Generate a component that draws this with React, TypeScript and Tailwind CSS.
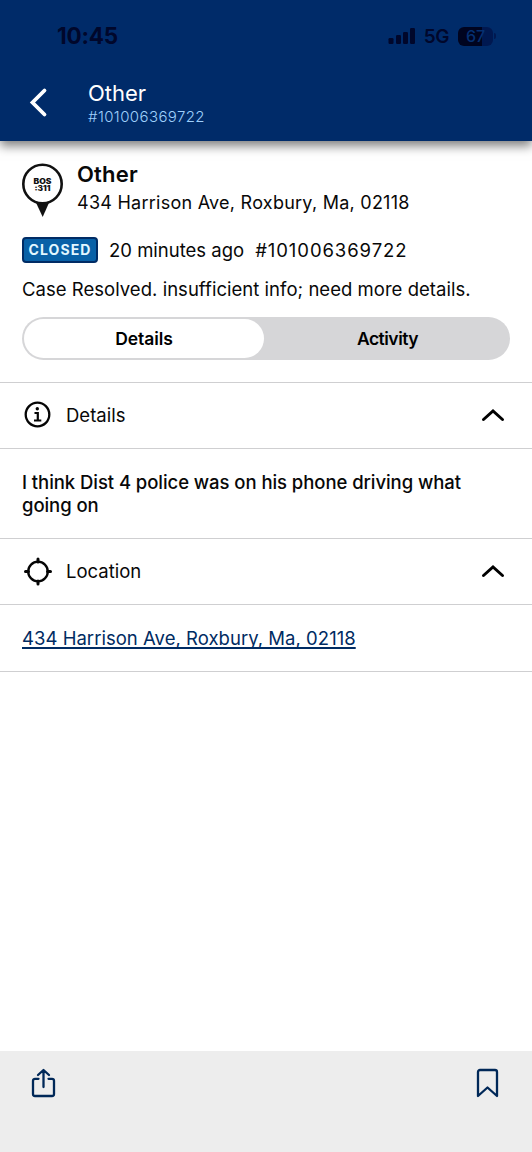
import type { ReactNode } from "react";

function StatusBar() {
  return (
    <div className="flex h-[72px] items-center justify-between pr-[36px] pl-[57px] text-[#00072b]">
      <span className="text-[22.500px] leading-[72px] font-bold tracking-[-0.200px]">10:45</span>
      <div className="flex items-center">
        <svg width="28" height="18" viewBox="0 0 28 18" fill="currentColor">
          <rect x="0.5" y="11" width="5" height="6" rx="1.3" />
          <rect x="8" y="8" width="5" height="9" rx="1.3" />
          <rect x="15" y="5" width="5" height="12" rx="1.3" />
          <rect x="22" y="1" width="5" height="16" rx="1.3" />
        </svg>
        <span className="mt-px ml-[8px] text-[19px] leading-6 font-semibold tracking-[-0.500px]">5G</span>
        <div className="ml-[9px] flex items-center gap-px">
          <div className="flex h-[19px] w-[35px] items-center justify-center rounded-[6px] bg-gradient-to-r from-[#00041f] from-68% to-[#001850] to-68% text-[16px] leading-none font-medium text-[#053071]">
            67
          </div>
          <div className="h-[6px] w-[2px] rounded-r-full bg-[#001850]" />
        </div>
      </div>
    </div>
  );
}

function Header() {
  return (
    <header className="relative z-10 h-[141px] bg-[#002b69] shadow-[0_5px_10px_rgba(0,0,0,0.5)]">
      <StatusBar />
      <div className="flex pl-[28px]">
        <svg className="mt-[15px]" width="22" height="32" viewBox="0 0 22 32" fill="none" stroke="white" strokeWidth="3.800" strokeLinecap="round" strokeLinejoin="miter">
          <path d="M16.500 3.500 4.500 15.500l12 12" />
        </svg>
        <div className="ml-[38px] pt-[7px]">
          <div className="text-[22px] leading-[28px] text-white">Other</div>
          <div className="mt-px text-[15px] leading-[18px] font-light tracking-[0.400px] text-[#9fd0fb]">#101006369722</div>
        </div>
      </div>
    </header>
  );
}

function CasePin() {
  return (
    <svg className="mt-[2px]" width="42" height="56" viewBox="0 0 42 56">
      <path d="M13 37.500h15L20.700 54z" fill="#111" />
      <circle cx="20.500" cy="21" r="19.200" fill="white" stroke="#111" strokeWidth="2.600" />
      <text x="20.500" y="20.600" textAnchor="middle" textLength="18" lengthAdjust="spacingAndGlyphs" fontSize="7.200" fontWeight="900" fill="#111">BOS</text>
      <text x="20.500" y="28.400" textAnchor="middle" textLength="16" lengthAdjust="spacingAndGlyphs" fontSize="7.200" fontWeight="900" fill="#111">:311</text>
    </svg>
  );
}

function SectionRow({ icon, label }: { icon: ReactNode; label: string }) {
  return (
    <div className="flex h-[66px] items-center border-b border-[#cfcfd1] pr-[27px] pb-[2px] pl-[22px]">
      {icon}
      <span className="ml-[13px] text-[18.500px] leading-6">{label}</span>
      <svg className="ml-auto" width="24" height="16" viewBox="0 0 24 16" fill="none" stroke="black" strokeWidth="3" strokeLinecap="round" strokeLinejoin="miter">
        <path d="M2.500 12.500 12 4l9.500 8.500" />
      </svg>
    </div>
  );
}

const infoIcon = (
  <svg width="31" height="28" viewBox="0 0 31 28" fill="none" stroke="#050505">
    <circle cx="15.500" cy="13.500" r="11.800" strokeWidth="2.300" />
    <circle cx="15.300" cy="7.800" r="1.700" fill="#050505" stroke="none" />
    <path d="M12.500 12h3.300v7.300M12 19.500h7.300" strokeWidth="2.200" />
  </svg>
);

const locateIcon = (
  <svg width="31" height="30" viewBox="0 0 31 30" fill="none" stroke="#050505" strokeLinecap="round">
    <circle cx="16" cy="15.500" r="9.800" strokeWidth="2.300" />
    <path d="M16 3v3M16 25v3M3.500 15.500h3M25.500 15.500h3" strokeWidth="3" />
  </svg>
);

export default function App() {
  return (
    <div className="flex h-[1152px] w-[532px] flex-col overflow-hidden bg-white font-['Inter',sans-serif] whitespace-nowrap text-[#080808]">
      <Header />
      <main className="flex-1">
        <section className="flex h-[242px] flex-col border-b border-[#cfcfd1] px-[22px] pt-[20px]">
          <div className="flex h-[56px]">
            <CasePin />
            <div className="ml-[13px]">
              <h1 className="text-[22px] leading-[27px] font-semibold tracking-[0.200px]">Other</h1>
              <p className="mt-[3px] text-[18px] leading-[24px] tracking-[0.250px]">434 Harrison Ave, Roxbury, Ma, 02118</p>
            </div>
          </div>
          <div className="mt-[20px] flex h-[26px] items-center">
            <span className="flex h-[26px] w-[76px] items-center justify-center rounded-[4px] border-2 border-[#002c65] bg-[#0861a7] text-[14px] leading-none font-bold tracking-[1.100px] text-[#e2f7ff]">CLOSED</span>
            <span className="ml-[11px] text-[18.500px] leading-6">20 minutes ago</span>
            <span className="ml-[11px] text-[18.500px] leading-6 tracking-[0.920px]">#101006369722</span>
          </div>
          <p className="mt-[14px] text-[18.500px] leading-[24px] tracking-[0.030px]">Case Resolved. insufficient info; need more details.</p>
          <div className="mt-[16px] flex h-[43px] shrink-0 rounded-full bg-[#d6d6d8] p-[2px] text-[17.500px] font-semibold text-black">
            <button className="w-[240px] rounded-full bg-white pt-[2px] tracking-[-0.100px]">Details</button>
            <button className="flex-1 pt-[2px] pl-[3px] tracking-[-0.500px]">Activity</button>
          </div>
        </section>
        <SectionRow icon={infoIcon} label="Details" />
        <div className="h-[90px] border-b border-[#cfcfd1] px-[22px] pt-[22px] text-[18.500px] leading-[23px] font-medium tracking-[-0.060px]">
          I think Dist 4 police was on his phone driving what
          <br />
          going on
        </div>
        <SectionRow icon={locateIcon} label="Location" />
        <div className="flex h-[67px] items-center border-b border-[#cfcfd1] px-[22px]">
          <a href="#" className="text-[18.500px] leading-6 tracking-[0.030px] text-[#002b62] underline decoration-[1.500px] underline-offset-[2px] [text-decoration-skip-ink:none]">434 Harrison Ave, Roxbury, Ma, 02118</a>
        </div>
      </main>
      <footer className="flex h-[101px] justify-between bg-[#ededed] px-[30px] pt-[16px] text-[#002858]">
        <svg width="27" height="34" viewBox="0 0 27 34" fill="none" stroke="currentColor" strokeWidth="2.300" strokeLinecap="round" strokeLinejoin="round">
          <path d="M8.500 11.800H5a2 2 0 0 0-2 2V27a2 2 0 0 0 2 2h17a2 2 0 0 0 2-2V13.800a2 2 0 0 0-2-2h-3.500M13.500 20V3.500M8 8l5.500-5L19 8" />
        </svg>
        <svg className="mr-[1px]" width="26" height="34" viewBox="0 0 26 34" fill="none" stroke="currentColor" strokeWidth="2.300" strokeLinejoin="round">
          <path d="M3 29V5a2 2 0 0 1 2-2H20a2 2 0 0 1 2 2v24L12.500 20.500z" />
        </svg>
      </footer>
    </div>
  );
}
